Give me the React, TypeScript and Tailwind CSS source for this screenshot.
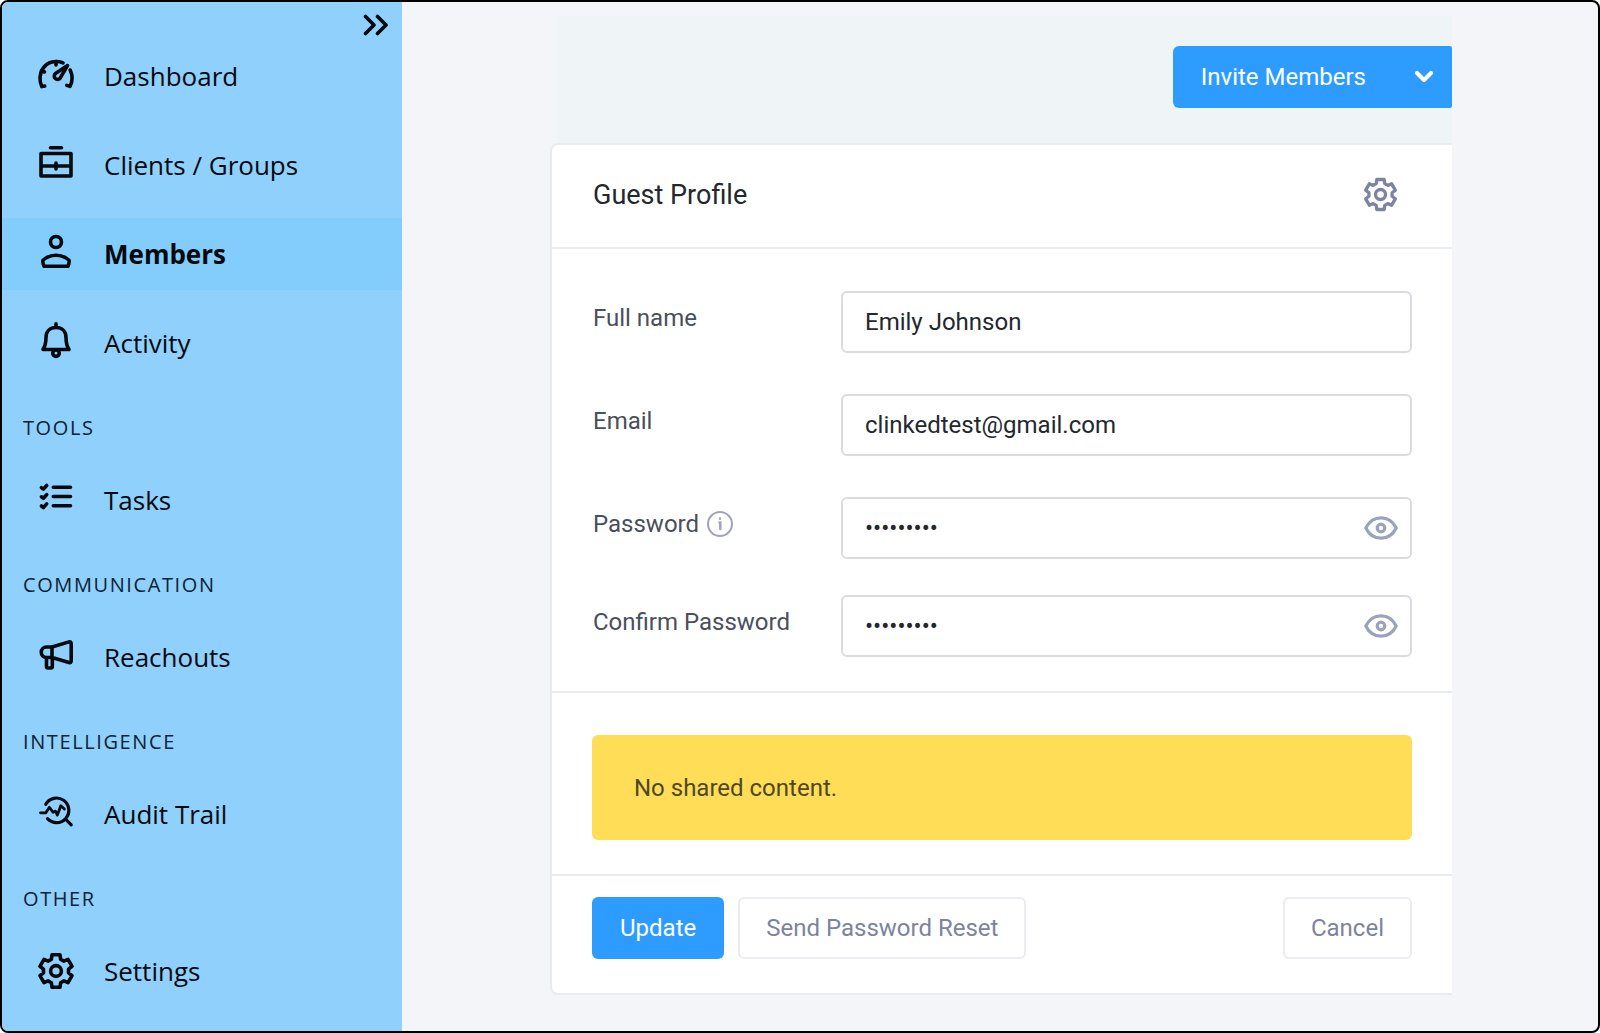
import React, { useState } from "react";

type IconProps = { className?: string };

function Svg({ children, className = "size-10" }: { children: React.ReactNode; className?: string }) {
  return (
    <svg
      viewBox="0 0 40 40"
      className={className + " shrink-0 overflow-visible"}
      fill="none"
      stroke="currentColor"
      strokeWidth={3.6}
      strokeLinecap="round"
      strokeLinejoin="round"
      aria-hidden="true"
    >
      {children}
    </svg>
  );
}

const GaugeIcon = () => (
  <Svg>
    <path d="M8.7 30 5.8 30.6C3.200 25.200 3.300 17.600 7 12.400 11.600 6 19.500 3.800 27 6.800" />
    <path d="M20 5.500V9M5.500 14.600l3 1.400" />
    <path d="M34.200 14c2.400 5.200 2.300 11.600-.2 16.400l-3.200-1" />
    <path d="M31.500 9.500 19.500 17.500a3.300 3.300 0 1 0 4.800 4.400Z" />
  </Svg>
);

const BriefcaseIcon = () => (
  <Svg>
    <path d="M5 8.500h30v22.500H5ZM5 21h30M20 18v6M14.500 2.800h11" />
  </Svg>
);

const PersonIcon = () => (
  <Svg>
    <circle cx="20" cy="8" r="5.500" />
    <path d="M7 26.300C11 22.500 16 21.300 20 21.300s9 1.200 13 5c.6 2-.3 4.200-1 6H8c-.7-1.800-1.600-4-1-6Z" />
  </Svg>
);

const BellIcon = () => (
  <Svg>
    <path d="M20 .8v3M7 26.500C9.300 23 10 20 10 14.500 10 8.500 14 4.500 20 4.500S30 8.500 30 14.500c0 5.500.7 8.500 3 12Z" />
    <circle cx="20" cy="30.200" r="3.200" />
  </Svg>
);

const ChecklistIcon = () => (
  <Svg>
    <path d="M17.300 7.300h17.200M17.300 16.500h17.200M17.300 25.700h17.200" />
    <path d="m5.400 7.600 2 1.500 3.300-3.600M5.400 16.800l2 1.500 3.300-3.600M5.400 26l2 1.500 3.300-3.600" />
  </Svg>
);

const MegaphoneIcon = () => (
  <Svg>
    <path d="M16 10 33 4.900q2.200-.5 2.200 2v16.800q0 2.500-2.200 1.800L16 20.500Z" />
    <path d="M16 10h-5.500a5.250 5.250 0 0 0 0 10.500H16M10.500 21v8.500q0 1.500 1.500 1.500h2.800q1.500 0 1.500-1.500v-8.500" />
  </Svg>
);

const AuditIcon = () => (
  <Svg>
    <path strokeWidth={3.200} d="M9.800 10.300A12.300 12.300 0 1 1 11.500 24.700M30 25.500l5.200 5.400" />
    <path strokeWidth={2.800} d="M4.500 18.800h5.300l3.600-5.500 3.600 5 2.400-1.200 2 4 3.400-9.300 3.600 3.200" />
  </Svg>
);

const turn = (x: number, y: number, deg: number) => {
  const a = (deg * Math.PI) / 180;
  return (
    (20 + x * Math.cos(a) - y * Math.sin(a)).toFixed(2) +
    " " +
    (20 + x * Math.sin(a) + y * Math.cos(a)).toFixed(2)
  );
};

const gearPath =
  [0, 60, 120, 180, 240, 300]
    .map(
      (d, i) =>
        (i ? "L" : "M") +
        turn(-4.600, -11.800, d) +
        "L" + turn(-4, -16.200, d) +
        "L" + turn(4, -16.200, d) +
        "L" + turn(4.600, -11.800, d),
    )
    .join("") + "Z";

const GearIcon = ({ className }: IconProps) => (
  <Svg className={className}>
    <path d={gearPath} />
    <circle cx="20" cy="20" r="5.400" />
  </Svg>
);

const EyeIcon = () => (
  <svg viewBox="0 0 34 24" className="h-6 w-[34px]" fill="none" stroke="currentColor" strokeWidth={3.200} strokeLinejoin="round" aria-hidden="true">
    <path d="M1.800 12C5 5.500 10.500 1.800 17 1.800S29 5.500 32.200 12C29 18.500 23.500 22.200 17 22.200S5 18.500 1.800 12Z" />
    <circle cx="17" cy="12" r="3.800" />
  </svg>
);

function NavItem({ icon, label, active }: { icon: React.ReactNode; label: string; active?: boolean }) {
  return (
    <a
      href="#"
      aria-current={active ? "page" : undefined}
      className={
        "flex h-[72px] items-center gap-7 pl-[34px] text-[26px] " + (active ? "bg-[#82cdfb] font-bold" : "")
      }
    >
      {icon}
      <span>{label}</span>
    </a>
  );
}

function NavHeading({ children }: { children: React.ReactNode }) {
  return (
    <h2 className="flex h-[85px] items-center pt-3 pl-[21px] text-[20px] tracking-[0.08em] text-[#0c2233] uppercase">
      {children}
    </h2>
  );
}

function Field({
  id,
  label,
  value,
  secret,
  info,
}: {
  id: string;
  label: string;
  value: string;
  secret?: boolean;
  info?: boolean;
}) {
  const [text, setText] = useState(value);
  const [shown, setShown] = useState(false);
  return (
    <div className="flex items-start">
      <div className="flex w-[248px] shrink-0 items-center gap-2 pt-[11px] leading-8 text-[#4a4f5c]">
        <label htmlFor={id}>{label}</label>
        {info && (
          <svg viewBox="0 0 26 26" className="size-[26px]" fill="none" stroke="#9fa3c0" strokeWidth={2} strokeLinecap="round" aria-hidden="true">
            <circle cx="13" cy="13" r="12" />
            <path d="M12.500 11.500h.8v6.500M13 7.500v.2" strokeWidth={2.500} />
          </svg>
        )}
      </div>
      <div className="relative flex-1">
        <input
          id={id}
          type={secret && !shown ? "password" : "text"}
          value={text}
          onChange={(e) => setText(e.target.value)}
          className="h-[62px] w-full rounded-md border-2 border-[#d9dbe1] bg-white px-[22px] text-[#23272e] outline-none focus:border-[#2e9cff]"
        />
        {secret && (
          <button
            type="button"
            aria-label="Show password"
            onClick={() => setShown(!shown)}
            className="absolute top-[19px] right-[14px] text-[#9ba2bd]"
          >
            <EyeIcon />
          </button>
        )}
      </div>
    </div>
  );
}

export default function App() {
  return (
    <div className="flex min-h-screen overflow-hidden rounded-lg border-2 border-black bg-[#f3f5f9]">
      <aside className="w-[400px] shrink-0 bg-[#8fd0fd] font-['Open_Sans',sans-serif] text-[#05090d]">
        <div className="flex h-[38px] items-end justify-end pr-[13px] pb-1">
          <button type="button" aria-label="Collapse menu">
            <svg viewBox="0 0 26 22" className="h-[22px] w-[26px]" fill="none" stroke="currentColor" strokeWidth={3.600} strokeLinecap="round" strokeLinejoin="round" aria-hidden="true">
              <path d="m2.500 2.500 8.500 8.500-8.500 8.500M14.500 2.500 23 11l-8.500 8.500" />
            </svg>
          </button>
        </div>
        <nav>
          <div className="flex flex-col gap-[17px]">
            <NavItem icon={<GaugeIcon />} label="Dashboard" />
            <NavItem icon={<BriefcaseIcon />} label="Clients / Groups" />
            <NavItem icon={<PersonIcon />} label="Members" active />
            <NavItem icon={<BellIcon />} label="Activity" />
          </div>
          <NavHeading>Tools</NavHeading>
          <NavItem icon={<ChecklistIcon />} label="Tasks" />
          <NavHeading>Communication</NavHeading>
          <NavItem icon={<MegaphoneIcon />} label="Reachouts" />
          <NavHeading>Intelligence</NavHeading>
          <NavItem icon={<AuditIcon />} label="Audit Trail" />
          <NavHeading>Other</NavHeading>
          <NavItem icon={<GearIcon className="size-10" />} label="Settings" />
        </nav>
      </aside>

      <main className="min-w-0 flex-1 pr-[146px] pl-[148px] font-['Roboto',sans-serif] text-2xl">
        <div className="mt-[14px] ml-2 flex justify-end bg-[#eff4f7] pt-[30px] pb-[35px]">
          <div className="flex h-[62px] overflow-hidden rounded-l-md rounded-r-xs bg-[#2e9cff] text-white">
            <button type="button" className="pr-5 pl-7">Invite Members</button>
            <button type="button" aria-label="More invite options" className="flex w-[66px] items-center justify-center pl-[10px]">
              <svg viewBox="0 0 18 12" className="h-3 w-[18px]" fill="none" stroke="currentColor" strokeWidth={4} strokeLinecap="round" strokeLinejoin="round" aria-hidden="true">
                <path d="m2 2 7 7 7-7" />
              </svg>
            </button>
          </div>
        </div>

        <section className="rounded-l-lg border-2 border-r-0 border-[#e9ebf0] bg-white">
          <header className="flex h-[102px] items-center justify-between pr-[53px] pl-[41px]">
            <h1 className="text-[27px] text-[#23272e]">Guest Profile</h1>
            <button type="button" aria-label="Profile settings" className="pb-1 text-[#7d849f]">
              <GearIcon className="size-[37px]" />
            </button>
          </header>
          <form onSubmit={(e) => e.preventDefault()}>
            <div className="flex flex-col gap-[41px] border-y-2 border-[#e9ebf0] pt-[42px] pr-10 pb-[34px] pl-[41px]">
              <Field id="name" label="Full name" value="Emily Johnson" />
              <Field id="email" label="Email" value="clinkedtest@gmail.com" />
              <div className="flex flex-col gap-9">
                <Field id="password" label="Password" value="secret123" secret info />
                <Field id="confirm" label="Confirm Password" value="secret123" secret />
              </div>
            </div>
            <div className="border-b-2 border-[#e9ebf0] px-10 pt-[42px] pb-[34px]">
              <p role="status" className="flex h-[105px] items-center rounded-md bg-[#ffdd57] px-[42px] text-[#4f4824]">
                No shared content.
              </p>
            </div>
            <div className="flex gap-[14px] px-10 pt-[21px] pb-[34px] text-[#7d839f]">
              <button type="submit" className="h-[62px] rounded-md bg-[#2e9cff] px-7 text-white">Update</button>
              <button type="button" className="h-[62px] rounded-md border-2 border-[#ebecf0] px-[26px]">Send Password Reset</button>
              <button type="button" className="ml-auto h-[62px] rounded-md border-2 border-[#ebecf0] px-[26px]">Cancel</button>
            </div>
          </form>
        </section>
      </main>
    </div>
  );
}
